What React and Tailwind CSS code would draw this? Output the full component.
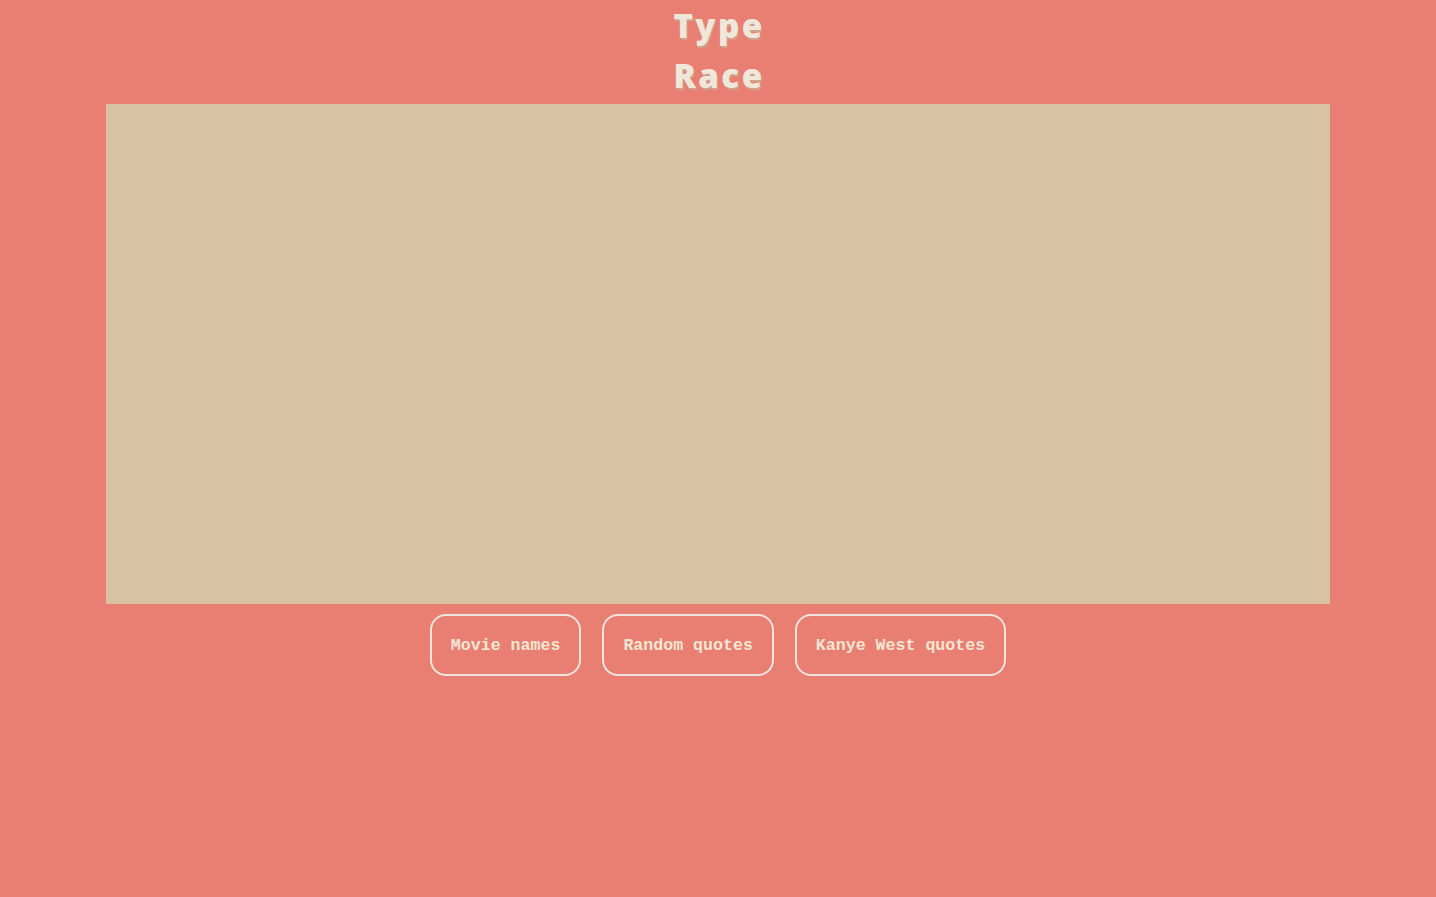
export default function App() {
  const sets = ['Movie names', 'Random quotes', 'Kanye West quotes'];

  return (
    <div className="min-h-screen bg-[#e87f72] flex flex-col items-center">
      <h1 className="w-min text-center text-[33px] leading-[50px] font-extrabold tracking-[2.5px] text-[#efe7da] [text-shadow:1px_2px_1px_#cfa48f] [font-family:'Open_Sans',sans-serif] pt-[1px] pl-[2px] h-[104px]">
        Type Race
      </h1>

      {/* typing area */}
      <div className="w-[1224px] h-[500px] bg-[#d9c3a5]"></div>

      <div className="flex gap-[21px] mt-[10px]">
        {sets.map((s) => (
          <button
            key={s}
            className="h-[62px] px-[19px] pt-[3px] rounded-[16px] border-2 border-[#efe4de] text-[#f3e6d2] text-[16.6px] font-bold [font-family:'Liberation_Mono',monospace]"
          >
            {s}
          </button>
        ))}
      </div>
    </div>
  );
}
